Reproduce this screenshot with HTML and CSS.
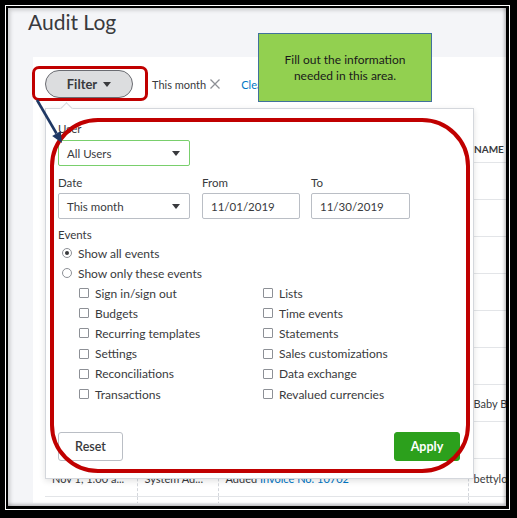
FILE: index.html
```html
<!DOCTYPE html>
<html lang="en">
  <head>
    <meta charset="UTF-8" />
    <meta name="viewport" content="width=device-width, initial-scale=1.0" />
    <title>Audit Log</title>
    <link rel="stylesheet" href="styles.css">
  </head>
  <body>
    <div class="frame">
      <div class="frame-white">
        <div class="frame-black">
          <div class="page">
            <h1 class="title">Audit Log</h1>

            <section class="card">
              <div class="toolbar">
                <button class="filter-btn">Filter <span class="caret"></span></button>
                <span class="chip">This month
                  <svg class="chip-x" width="12" height="12" viewBox="0 0 12 12"><path d="M1.5 1.5l9 9M10.5 1.5l-9 9" /></svg>
                </span>
                <a class="link">Clear filter</a>
              </div>

              <!-- most of the log sits under the open filter panel -->
              <table class="log">
                <colgroup>
                  <col class="c1"><col class="c2"><col class="c3"><col>
                </colgroup>
                <thead>
                  <tr><th></th><th></th><th></th><th>NAME</th></tr>
                </thead>
                <tbody>
                  <tr><td></td><td></td><td></td><td></td></tr>
                  <tr><td></td><td></td><td></td><td></td></tr>
                  <tr><td></td><td></td><td></td><td></td></tr>
                  <tr><td></td><td></td><td></td><td></td></tr>
                  <tr><td></td><td></td><td></td><td></td></tr>
                  <tr><td></td><td></td><td></td><td></td></tr>
                  <tr><td></td><td></td><td></td><td>Baby B...</td></tr>
                  <tr><td></td><td></td><td></td><td></td></tr>
                  <tr class="low"><td>Nov 1, 1:00 a...</td><td>System Ad...</td><td>Added <span class="blue">Invoice No. 10702</span></td><td>bettylo...</td></tr>
                  <tr><td></td><td></td><td></td><td></td></tr>
                </tbody>
              </table>
            </section>

            <div class="popover">
              <div class="field">
                <label class="label">User</label>
                <div class="select select-active">All Users <span class="caret"></span></div>
              </div>

              <div class="field-row">
                <div class="field">
                  <label class="label">Date</label>
                  <div class="select">This month <span class="caret"></span></div>
                </div>
                <div class="field">
                  <label class="label">From</label>
                  <div class="input input-from">11/01/2019</div>
                </div>
                <div class="field">
                  <label class="label">To</label>
                  <div class="input input-to">11/30/2019</div>
                </div>
              </div>

              <div class="events">
                <label class="label">Events</label>
                <div class="radio checked"><span class="dot"></span>Show all events</div>
                <div class="radio"><span class="dot"></span>Show only these events</div>
                <ul class="checks">
                  <li><span class="box"></span>Sign in/sign out</li>
                  <li><span class="box"></span>Lists</li>
                  <li><span class="box"></span>Budgets</li>
                  <li><span class="box"></span>Time events</li>
                  <li><span class="box"></span>Recurring templates</li>
                  <li><span class="box"></span>Statements</li>
                  <li><span class="box"></span>Settings</li>
                  <li><span class="box"></span>Sales customizations</li>
                  <li><span class="box"></span>Reconciliations</li>
                  <li><span class="box"></span>Data exchange</li>
                  <li><span class="box"></span>Transactions</li>
                  <li><span class="box"></span>Revalued currencies</li>
                </ul>
              </div>

              <div class="actions">
                <button class="btn btn-reset">Reset</button>
                <button class="btn btn-apply">Apply</button>
              </div>
            </div>

            <!-- annotations drawn on top of the screenshot -->
            <div class="mark mark-filter"></div>
            <div class="mark mark-panel"></div>
            <svg class="pointer" width="50" height="60" viewBox="0 0 50 60">
              <line x1="9" y1="7" x2="28.5" y2="40.5" />
              <polygon points="34,50 32.8,38 24.2,43" />
            </svg>
            <div class="note">Fill out the information<br>needed in this area.</div>
            <div class="edge-shadow"></div>
          </div>
        </div>
      </div>
    </div>
  </body>
</html>
```

FILE: styles.css
```css
body {
  margin: 0;
  background-color: black;
  font-family: Lato, "Open Sans", sans-serif;
  color: #393a3d;
}
ul {
  margin: 0;
  padding: 0;
  list-style: none;
}
button {
  font-family: inherit;
  cursor: pointer;
}

/* picture frame */
.frame {
  width: 517px;
  height: 518px;
  box-sizing: border-box;
  border-style: solid;
  border-color: black;
  border-width: 5px 7px 8px 5px;
}
.frame-white {
  height: 100%;
  box-sizing: border-box;
  border: 1px solid white;
}
.frame-black {
  height: 100%;
  box-sizing: border-box;
  border-style: solid;
  border-color: black;
  border-width: 2px 3px 3px 2px;
}
.page {
  position: relative;
  height: 100%;
  overflow: hidden;
  background-color: #f4f5f8;
  display: flex;
  flex-direction: column;
}
.edge-shadow {
  position: absolute;
  inset: 0;
  pointer-events: none;
  box-shadow: inset 2px 2px 4px rgba(0, 0, 0, 0.18), inset -2px -2px 3px rgba(0, 0, 0, 0.2);
}

.title {
  flex-shrink: 0;
  margin: 0;
  height: 49px;
  box-sizing: border-box;
  padding: 2px 0 0 20px;
  font-size: 21px;
  line-height: 24px;
  font-weight: 400;
  color: #393a3d;
}

/* card with the log table */
.card {
  flex: 1;
  min-height: 0;
  overflow: hidden;
  margin-left: 25px;
  margin-bottom: 3px;
  padding: 13px 0 0 12px;
  background-color: white;
}
.toolbar {
  display: flex;
  align-items: center;
  height: 28px;
}
.filter-btn {
  width: 88px;
  height: 28px;
  padding: 0;
  border: 1.5px solid #6b6c72;
  border-radius: 14px;
  background-color: #dcdddf;
  font-size: 13px;
  font-weight: 700;
  color: #393a3d;
  display: flex;
  align-items: center;
  justify-content: center;
  gap: 6px;
}
.caret {
  width: 0;
  height: 0;
  border-left: 4px solid transparent;
  border-right: 4px solid transparent;
  border-top: 5px solid #393a3d;
}
.chip {
  margin-left: 19px;
  font-size: 11px;
  display: flex;
  align-items: center;
  gap: 3px;
}
.chip-x {
  stroke: #8d9096;
  stroke-width: 1.3;
}
.link {
  margin-left: 20px;
  font-size: 11px;
  color: #0077c5;
}

.log {
  margin-top: 20px;
  width: 100%;
  table-layout: fixed;
  border-collapse: collapse;
  font-size: 11px;
  color: #393a3d;
}
.log .c1 { width: 92px; }
.log .c2 { width: 81px; }
.log .c3 { width: 250px; }
.log th {
  height: 37px;
  padding: 0 0 7px 6px;
  vertical-align: bottom;
  text-align: left;
  font-size: 10px;
  font-weight: 700;
  border-bottom: 1px solid #e3e5e8;
}
.log td {
  height: 36px;
  padding: 0 0 0 7px;
  white-space: nowrap;
  overflow: hidden;
  border-bottom: 1px solid #e3e5e8;
}
.log td + td {
  border-left: 1px dashed #d4d7dc;
}
.log td:last-child {
  padding-left: 5px;
}
.log .low td {
  padding-top: 1px;
}
.blue {
  color: #0077c5;
}

/* filter dropdown */
.popover {
  position: absolute;
  left: 37px;
  top: 100px;
  width: 429px;
  height: 371px;
  box-sizing: border-box;
  padding: 13px 13px 17px 12px;
  background-color: white;
  border: 1px solid #d4d7dc;
  box-shadow: 0 2px 6px rgba(0, 0, 0, 0.12);
  display: flex;
  flex-direction: column;
  font-size: 12px;
}
.popover::before {
  content: "";
  position: absolute;
  left: 16px;
  top: -5px;
  width: 8px;
  height: 8px;
  background-color: white;
  border-left: 1px solid #d4d7dc;
  border-top: 1px solid #d4d7dc;
  transform: rotate(45deg);
}
.field {
  display: flex;
  flex-direction: column;
}
.label {
  font-size: 11.5px;
  line-height: 14px;
  margin-bottom: 4px;
}
.select,
.input {
  height: 26px;
  box-sizing: border-box;
  border: 1px solid #babec5;
  border-radius: 2px;
  display: flex;
  align-items: center;
  font-size: 11.5px;
}
.select {
  width: 132px;
  padding: 0 9px 0 8px;
  justify-content: space-between;
}
.select-active {
  border-color: #79cf6c;
}
.input {
  padding: 0 8px;
}
.input-from { width: 98px; }
.input-to { width: 99px; }
.field-row {
  display: flex;
  gap: 12px;
  margin-top: 10px;
}
.field-row .label {
  margin-bottom: 3px;
}
.field-row .field:last-child {
  margin-left: -1px;
}

.events {
  margin-top: 9px;
}
.events .label {
  display: block;
  margin-bottom: 1px;
}
.radio {
  height: 20px;
  display: flex;
  align-items: center;
  gap: 6px;
  padding-left: 4px;
}
.dot {
  width: 10px;
  height: 10px;
  box-sizing: border-box;
  border: 1px solid #8d9096;
  border-radius: 50%;
  position: relative;
}
.radio.checked .dot::after {
  content: "";
  position: absolute;
  left: 2px;
  top: 2px;
  width: 4px;
  height: 4px;
  border-radius: 50%;
  background-color: #393a3d;
}
.checks {
  display: grid;
  grid-template-columns: 184px 1fr;
  padding-left: 21px;
}
.checks li {
  height: 20.2px;
  display: flex;
  align-items: center;
  gap: 6px;
}
.box {
  width: 10px;
  height: 10px;
  box-sizing: border-box;
  border: 1px solid #8d9096;
  border-radius: 1px;
}

.actions {
  margin-top: auto;
  display: flex;
  justify-content: space-between;
}
.btn {
  height: 29px;
  border-radius: 3px;
  font-size: 12.5px;
  padding: 0;
}
.btn-reset {
  width: 65px;
  border: 1px solid #babec5;
  background-color: white;
  color: #393a3d;
  font-weight: 600;
}
.btn-apply {
  width: 66px;
  border: 1px solid #2ca01c;
  background-color: #2ca01c;
  color: white;
  font-weight: 700;
}

/* annotations */
.mark {
  position: absolute;
  box-sizing: border-box;
  border: 3px solid #c00000;
  pointer-events: none;
}
.mark-filter {
  left: 24px;
  top: 58px;
  width: 116px;
  height: 35px;
  border-radius: 7px;
}
.mark-panel {
  left: 42px;
  top: 110px;
  width: 420px;
  height: 355px;
  border-width: 4px;
  border-radius: 48px;
}
.pointer {
  position: absolute;
  left: 20px;
  top: 85px;
}
.pointer line {
  stroke: #1f3864;
  stroke-width: 2.6;
}
.pointer polygon {
  fill: #1f3864;
}
.note {
  position: absolute;
  left: 250px;
  top: 25px;
  width: 174px;
  height: 69px;
  box-sizing: border-box;
  border: 1px solid #41719c;
  background-color: #92d050;
  display: flex;
  align-items: center;
  justify-content: center;
  text-align: center;
  font-size: 12px;
  line-height: 16px;
  color: #1a1a1a;
}
```
